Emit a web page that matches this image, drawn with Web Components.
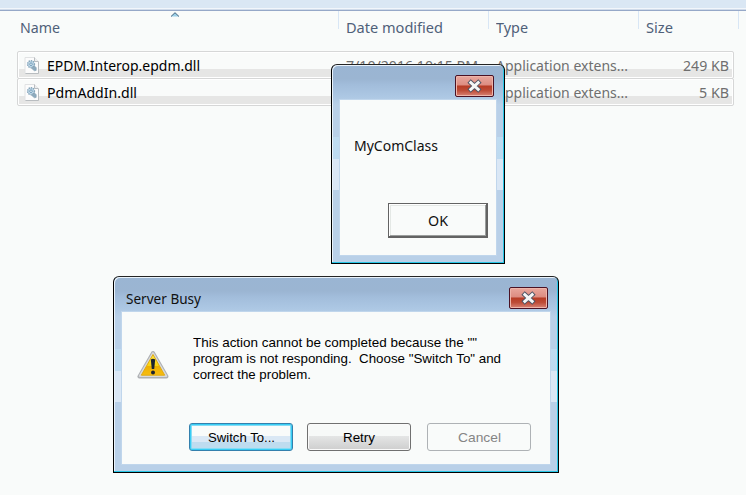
<!DOCTYPE html>
<html lang="en"><head><meta charset="utf-8"><title>Server Busy</title>
<style>
html,body{margin:0;height:100%;overflow:hidden;background:#f9fbfa}
body{font:15px/20px "Noto Sans",sans-serif;color:#111;position:relative}
message-box,busy-box{position:absolute}
message-box{left:331px;top:64px}
busy-box{left:113px;top:276px}
</style></head><body>
<file-list></file-list>
<message-box></message-box>
<busy-box></busy-box>
<script>
const define=(name,html,setup)=>{
  const t=document.createElement('template');t.innerHTML=html;
  customElements.define(name,class extends HTMLElement{
    connectedCallback(){
      if(this.shadowRoot)return;
      this.attachShadow({mode:'open'}).append(t.content.cloneNode(true));
      if(setup)setup(this);
    }
  });
};
// Single line of text condensed or widened to the width given in "w".
define('fit-text',`<style>:host{display:inline-block;white-space:pre;text-align:left}span{display:inline-block;transform-origin:0 50%}</style><span></span>`,el=>{
  const s=el.shadowRoot.querySelector('span'),w=+el.getAttribute('w');
  s.textContent=el.getAttribute('text');
  const n=s.getBoundingClientRect().width;
  el.style.width=w+'px';
  if(n)s.style.transform='scaleX('+w/n+')';
});
define('dll-icon',`<style>:host{display:block;width:16px;height:17px}svg{display:block}</style>
<svg width="16" height="17" viewBox="0 0 16 17"><path d="M1 .5h9.5l4 4v12H1z" fill="#fcfcfc" stroke="#e0e2e3"/><path d="M14.5 5v11.5H1.5" fill="none" stroke="#b9bdc0"/><path d="M10.5.5v4h4" fill="#eceeef" stroke="#b9bdc0"/>
<circle cx="7" cy="7.2" r="3.4" fill="#c5dceb" stroke="#86a6ba" stroke-width="1.5" stroke-dasharray="1.4 .8"/><circle cx="7" cy="7.2" r="1.3" fill="#f2f8fb" stroke="#6d9ab8"/><path d="M7.5 11.3l2.8-2.5 2 2-.1 2.6-1.8.4z" fill="#8daabd" stroke="#7c98aa" stroke-width=".5"/></svg>`);
define('col-head',`<style>:host{display:block;box-sizing:border-box;height:18px;padding:6px 0 0 7px;border-left:1px solid #d8e6f5;color:#4f6079}:host([first]){border-left:0;padding-left:20px}:host([last]){padding:0}</style><slot></slot>`);
define('file-row',`<style>
:host{display:grid;grid-template-columns:29px 299px 150px 136px 1fr;box-sizing:border-box;height:28px;width:717px;margin-left:17px;margin-bottom:-1px;border:1px solid #d6d7d7;border-radius:2px;padding:3px 4px 0 0;color:#6f6f6f;background:linear-gradient(#e6e6e5,#e6e6e5) 1px 17px/calc(100% - 2px) 8px no-repeat,#f9fbfa;box-shadow:inset 0 0 0 1px #fff}
dll-icon{margin:2px 0 0 6px}</style>
<dll-icon></dll-icon><slot name="n"></slot><slot name="d"></slot><slot name="t"></slot><slot name="s"></slot>`);
define('file-list',`<style>:host{display:block}
.bar{height:8px;background:#dae7f4;border-bottom:1px solid #f2f6fb}.rule{height:2px;background:linear-gradient(#d0dbea 50%,#96a8c8 50%)}
.head{display:grid;grid-template-columns:338px 150px 150px 100px 8px;height:40px;position:relative}
.sort{position:absolute;left:170px;top:1px}
[slot=n]{color:#000}[slot=s]{justify-self:end}</style>
<div class="bar"></div><div class="rule"></div>
<div class="head"><col-head first><fit-text text="Name" w="40"></fit-text></col-head><col-head><fit-text text="Date modified" w="97"></fit-text></col-head><col-head><fit-text text="Type" w="32"></fit-text></col-head><col-head><fit-text text="Size" w="27"></fit-text></col-head><col-head last></col-head>
<svg class="sort" width="10" height="5"><path d="M1 4.5L5 .7l4 3.8z" fill="#9bd0e8"/><path d="M1 4.5L5 .7l4 3.8" fill="none" stroke="#3f617d"/></svg></div>
<file-row><fit-text slot="n" text="EPDM.Interop.epdm.dll" w="153"></fit-text><fit-text slot="d" text="7/10/2016 10:15 PM" w="132"></fit-text><fit-text slot="t" text="Application extens..." w="132"></fit-text><fit-text slot="s" text="249 KB" w="46"></fit-text></file-row>
<file-row><fit-text slot="n" text="PdmAddIn.dll" w="90"></fit-text><fit-text slot="d" text="" w="0"></fit-text><fit-text slot="t" text="Application extens..." w="132"></fit-text><fit-text slot="s" text="5 KB" w="30"></fit-text></file-row>`);
define('close-button',`<style>:host{display:block;box-sizing:border-box;width:39px;height:22px;border:1px solid #4b1224;border-radius:2px;background:linear-gradient(#e9a79d,#dc8b80 47%,#b63a24 48%,#bd4b36 72%,#d88376);box-shadow:inset 0 0 0 1px #eeb5aa}svg{display:block;margin:3px auto 0}</style>
<svg width="15" height="14" viewBox="0 0 15 14"><path d="M3.8 3.6l7.4 6.8M11.2 3.6l-7.4 6.8" stroke="#4d5364" stroke-width="4.8" stroke-linecap="square"/><path d="M3.8 3.6l7.4 6.8M11.2 3.6l-7.4 6.8" stroke="#f5f6f6" stroke-width="2.9" stroke-linecap="square"/></svg>`);
define('aero-window',`<style>
:host{display:flex;flex-direction:column;box-sizing:border-box;border:1px solid #000;border-top-color:#242424;border-radius:6px 6px 0 0;box-shadow:inset -1px -1px #27c6e6,inset 1px 1px #eaf3fb;padding:0 8px 8px;
background:linear-gradient(#9ab5d3 0,#9bb5d2 14px,#a2bddb 20px,#adc8e4 32px,#b9d0e8 40px,#b9d0e8 var(--a),#bfdcf1 var(--a),#bddaf0 var(--b),#dae7f5 var(--b),#dae7f5 var(--c),#b9d0e8 var(--c))}
header{height:35px;display:flex;justify-content:space-between;box-sizing:border-box;padding:10px 2px 0 4px;flex:none}
header span{padding-top:1px}
main{flex:1;background:#f9fbfa;box-shadow:0 0 0 1px #c0d6ec;box-sizing:border-box;overflow:hidden}</style>
<header><span><slot name="title"></slot></span><close-button></close-button></header><main><slot></slot></main>`);
define('classic-button',`<style>:host{display:grid;place-items:center;box-sizing:border-box;width:100px;height:35px;background:#f9fbfa;border:1px solid #636363;border-right-width:2px;border-bottom-width:2px;box-shadow:inset 1px 1px #fff,inset -1px -1px #9b9e9d,inset 2px 2px #e4e8e5}</style><slot></slot>`);
define('aero-button',`<style>:host{display:grid;place-items:center;box-sizing:border-box;width:104px;height:28px;padding-top:2px;border:1px solid #707070;border-radius:3px;color:#000;background:linear-gradient(#f7f9f8 0 45%,#e5e6e6 45%,#cecece);box-shadow:inset 0 0 0 1px #fafafa}
:host([primary]){border-color:#3480ad;background:linear-gradient(#f9fbfa 0 46%,#dae8f5 46% 68%,#bedcef 68%);box-shadow:inset 0 0 0 1px #37cdf4,inset 0 0 0 2px #86dcf5}
:host([off]){border-color:#aeb2b5;color:#858585;background:#f9fbfa;box-shadow:none}</style><slot></slot>`);
define('message-box',`<style>:host{display:block}aero-window{width:174px;height:200px;--a:72px;--b:94px;--c:125px}
.b{display:flex;flex-direction:column;height:155px;box-sizing:border-box;padding:35px 8px 17px 14px;justify-content:space-between}classic-button{align-self:flex-end}</style>
<aero-window><div class="b"><fit-text text="MyComClass" w="84"></fit-text><classic-button><fit-text text="OK" w="20"></fit-text></classic-button></div></aero-window>`);
define('warning-icon',`<style>:host{display:block;width:32px;height:30px}svg{display:block}</style>
<svg width="32" height="30" viewBox="0 0 32 30"><defs><linearGradient id="g" x2="0" y2="1"><stop stop-color="#ffe94d"/><stop offset=".55" stop-color="#fbd40d"/><stop offset=".56" stop-color="#efb000"/><stop offset="1" stop-color="#f7bd11"/></linearGradient></defs>
<path d="M16 3L2.5 26.5h27z" fill="#aeb0b3" stroke="#aeb0b3" stroke-width="4" stroke-linejoin="round"/><path d="M16 3.2L2.8 26h26.4z" fill="#d9dadc" stroke="#d9dadc" stroke-width="2" stroke-linejoin="round"/><path d="M16 4.5L4.3 25.2h23.4z" fill="url(#g)" stroke="#e1ab12" stroke-linejoin="round"/><path d="M13.8 9.5q2.2-1.5 4.4 0l-1 9.5h-2.4z" fill="#1d2430"/><circle cx="16" cy="22.5" r="2" fill="#1d2430"/></svg>`);
define('busy-box',`<style>:host{display:block}aero-window{width:446px;height:197px;--a:72px;--b:94px;--c:125px}
.b{height:152px;display:grid;grid-template-rows:111px 1fr}
.m{display:flex;padding:23px 0 0 15px;box-sizing:border-box}
warning-icon{margin-top:15px}.t{display:flex;flex-direction:column;margin-left:24px;font:13.33px/16px "Liberation Sans",sans-serif;color:#000}
.r{display:flex;padding-left:67px;font:13.33px/16px "Liberation Sans",sans-serif}aero-button{margin-right:14px}aero-button+aero-button{margin-right:16px}</style>
<aero-window><fit-text slot="title" text="Server Busy" w="75"></fit-text><div class="b"><div class="m"><warning-icon></warning-icon><div class="t"><fit-text text='This action cannot be completed because the ""' w="284"></fit-text><fit-text text='program is not responding.  Choose "Switch To" and' w="308"></fit-text><fit-text text="correct the problem." w="118"></fit-text></div></div>
<div class="r"><aero-button primary><fit-text text="Switch To..." w="67"></fit-text></aero-button><aero-button><fit-text text="Retry" w="32"></fit-text></aero-button><aero-button off><fit-text text="Cancel" w="43"></fit-text></aero-button></div></div></aero-window>`);
</script></body></html>
